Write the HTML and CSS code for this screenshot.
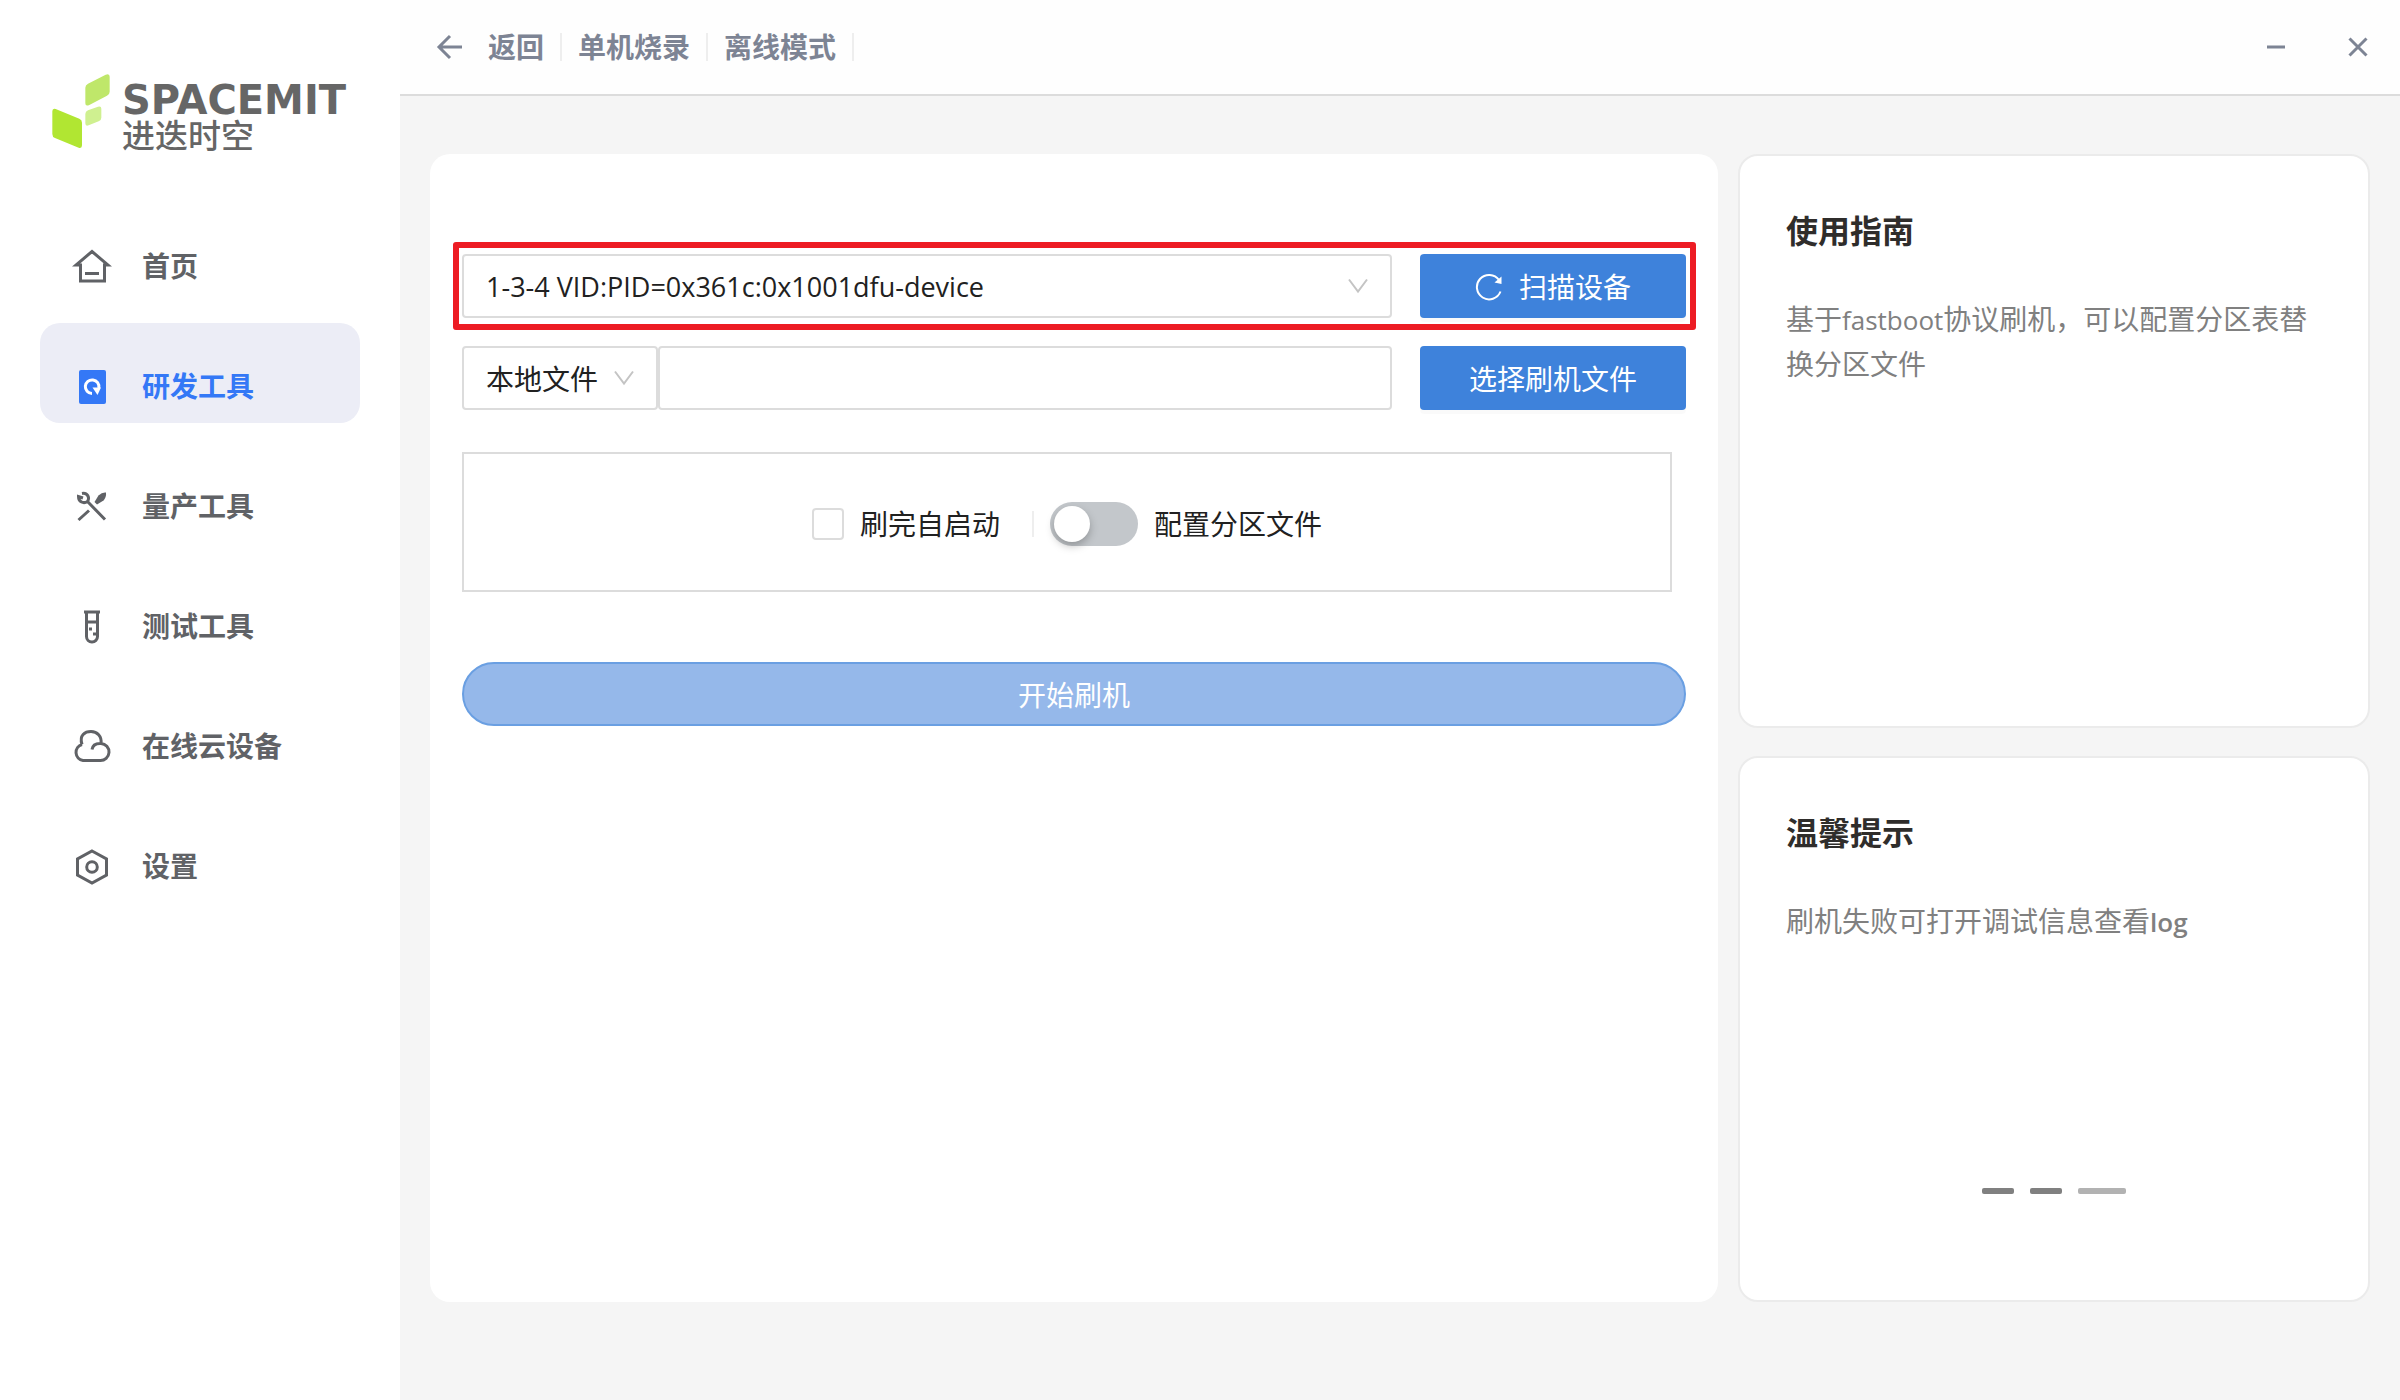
FILE: index.html
```html
<!DOCTYPE html>
<html lang="zh-CN">
<head>
<meta charset="utf-8">
<meta name="viewport" content="width=device-width, initial-scale=1">
<title>SPACEMIT 进迭时空</title>
<link rel="stylesheet" href="styles.css">
</head>
<body>
<div class="app">
  <aside class="sidebar">
    <div class="brand">
      <svg class="brand-mark" viewBox="66 43 172 222" aria-hidden="true">
        <path fill="#b1e632" d="M66 155q0-10 10-7l71 29q8 3 8 12v68q0 10-10 7l-71-29q-8-3-8-12z"/>
        <path fill="#bfe76a" d="M165 84q0-8 8-12l53-27q12-5 12 6v45q0 8-8 12l-53 28q-12 5-12-5z"/>
        <path fill="#cff090" d="M165 163q0-8 8-11l30-11q10-3 10 6v27q0 8-8 11l-30 12q-10 4-10-6z"/>
      </svg>
      <div class="brand-text">
        <span class="brand-en">SPACEMIT</span>
        <span class="brand-cn">进迭时空</span>
      </div>
    </div>
    <nav class="nav">
      <a class="nav-item" href="#home">
        <svg class="nav-icon" viewBox="0 0 40 40" aria-hidden="true"><path d="M4 19h4.500V35h24V19H36L20 5.500zM13 27.500h14"/></svg>
        <span>首页</span>
      </a>
      <a class="nav-item active" href="#dev" aria-current="page">
        <svg class="nav-icon" viewBox="0 0 40 40" aria-hidden="true"><rect x="7" y="4" width="27" height="34" rx="2" fill="currentColor" stroke="none"/><path stroke="#fff" d="M20 27.500A6.800 6.800 0 1 1 26.800 22"/><path fill="#fff" stroke="none" d="M20.500 21.500L29 21.500 25.500 29z"/></svg>
        <span>研发工具</span>
      </a>
      <a class="nav-item" href="#mass">
        <svg class="nav-icon" viewBox="0 0 40 40" aria-hidden="true"><path d="M10 7.500C15.500 6.500 18 11.500 15.500 15.500 11.500 18 6.500 16 6.500 10.500L11 12M15.500 15.500L33 33.500M17 24.500L6.500 34"/><path fill="currentColor" stroke="none" d="M22.500 16L26.500 9.500q3.500-3.500 7.500-3 .500 4.500-2.500 8L25 18.500z"/></svg>
        <span>量产工具</span>
      </a>
      <a class="nav-item" href="#test">
        <svg class="nav-icon" viewBox="0 0 40 40" aria-hidden="true"><path d="M12 6h16M14.500 6v24.500a5.500 5.500 0 0 0 11 0V6M14.500 16h11M17 23h3M21 28h3"/></svg>
        <span>测试工具</span>
      </a>
      <a class="nav-item" href="#cloud">
        <svg class="nav-icon" viewBox="1 0 40 40" aria-hidden="true"><path d="M11 18.500C8 9 14 5.500 20 5.500S31 10 30 17.500A8.500 8.500 0 0 1 29 34.500H12A8.200 8.200 0 0 1 11 18.500M30 17.500Q22 17 21 23.500"/></svg>
        <span>在线云设备</span>
      </a>
      <a class="nav-item" href="#settings">
        <svg class="nav-icon" viewBox="0 0 40 40" aria-hidden="true"><path d="M20 5l14.500 8v16L20 37 5.500 29V13z"/><circle cx="20" cy="21" r="5.300"/></svg>
        <span>设置</span>
      </a>
    </nav>
  </aside>

  <div class="workspace">
    <header class="topbar">
      <a class="crumb back" href="#back">
        <svg class="back-icon" viewBox="0 0 28 28" aria-hidden="true"><path d="M26 14H4M14 3L3 14l11 11"/></svg>
        <span>返回</span>
      </a>
      <a class="crumb" href="#single">单机烧录</a>
      <a class="crumb" href="#offline">离线模式</a>
      <div class="window-controls">
        <button class="window-btn" type="button" aria-label="最小化"><svg viewBox="0 0 20 20" aria-hidden="true"><path d="M1 10h18"/></svg></button>
        <button class="window-btn" type="button" aria-label="关闭"><svg viewBox="0 0 20 20" aria-hidden="true"><path d="M1.500 1.500l17 17M18.500 1.500l-17 17"/></svg></button>
      </div>
    </header>

    <main class="content">
      <form class="card flash-card">
        <div class="row highlighted">
          <div class="select-wrap device">
            <select aria-label="设备"><option>1-3-4 VID:PID=0x361c:0x1001dfu-device</option></select>
            <svg class="chevron" viewBox="0 0 20 20" aria-hidden="true"><path d="M1 3.500l9 12 9-12"/></svg>
          </div>
          <button class="btn" type="button">
            <svg class="reload" viewBox="0 0 28 28" aria-hidden="true"><path d="M25.500 18.500A12.200 12.200 0 1 1 24 7"/><path class="reload-tip" d="M26.500 3.500v7.500l-7-1.500z"/></svg>
            <span>扫描设备</span>
          </button>
        </div>
        <div class="row">
          <div class="source">
            <div class="select-wrap origin">
              <select aria-label="文件来源"><option>本地文件</option></select>
              <svg class="chevron" viewBox="0 0 20 20" aria-hidden="true"><path d="M1 3.500l9 12 9-12"/></svg>
            </div>
            <input class="path" type="text" aria-label="刷机文件路径">
          </div>
          <button class="btn" type="button">选择刷机文件</button>
        </div>
        <div class="options">
          <label class="option"><input class="check" type="checkbox">刷完自启动</label>
          <span class="divider"></span>
          <label class="option"><input class="switch" type="checkbox" role="switch">配置分区文件</label>
        </div>
        <button class="start" type="button">开始刷机</button>
      </form>

      <section class="card info">
        <h2>使用指南</h2>
        <p>基于<span class="latin">fastboot</span>协议刷机，可以配置分区表替换分区文件</p>
      </section>

      <section class="card info">
        <h2>温馨提示</h2>
        <p>刷机失败可打开调试信息查看<strong class="latin">log</strong></p>
        <div class="pager">
          <button type="button" aria-label="第 1 条"></button>
          <button type="button" aria-label="第 2 条"></button>
          <button class="current" type="button" aria-label="第 3 条"></button>
        </div>
      </section>
    </main>
  </div>
</div>
</body>
</html>
```
FILE: styles.css
```css
*,
*::before,
*::after {
  box-sizing: border-box;
}

body {
  margin: 0;
  background: #f5f5f5;
  color: #212121;
  font-family: "Open Sans", "Noto Sans CJK SC", sans-serif;
  font-size: 28px;
  line-height: 44px;
}

button,
input,
select {
  margin: 0;
  font: inherit;
  color: inherit;
}

a {
  color: inherit;
  text-decoration: none;
}

svg {
  flex: none;
  fill: none;
  stroke: currentColor;
}

.app {
  display: grid;
  grid-template-columns: 400px minmax(0, 1fr);
  min-height: 100vh;
}

/* Sidebar */
.sidebar {
  padding: 74px 40px 40px;
  background: #fff;
}

.brand {
  display: flex;
  gap: 12px;
  height: 76px;
  margin-bottom: 53px;
  padding-left: 12px;
  color: #666;
}

.brand-mark {
  width: 58px;
  height: 74px;
  stroke: none;
}

.brand-text {
  display: flex;
  flex-direction: column;
  padding-top: 8px;
  white-space: nowrap;
}

.brand-en {
  font-family: "DejaVu Sans", sans-serif;
  font-size: 40px;
  font-weight: 700;
  line-height: 36px;
}

.brand-cn {
  font-family: "Noto Sans CJK SC", sans-serif;
  font-size: 33px;
  font-weight: 500;
  line-height: 32px;
}

.nav {
  display: flex;
  flex-direction: column;
  gap: 20px;
}

.nav-item {
  display: flex;
  align-items: center;
  gap: 30px;
  height: 100px;
  padding: 26px 32px 0;
  border-radius: 20px;
  color: #606266;
  font-weight: 700;
}

.nav-item.active {
  background: #ecedf6;
  color: #3478f6;
}

.nav-icon {
  width: 40px;
  height: 40px;
  stroke-width: 3;
}

/* Top bar */
.workspace {
  display: flex;
  flex-direction: column;
}

.topbar {
  display: flex;
  align-items: center;
  height: 96px;
  padding: 0 22px 0 36px;
  background: #fefefe;
  border-bottom: 2px solid #dcdcdc;
  color: #7d8494;
  font-weight: 700;
}

.crumb {
  display: flex;
  align-items: center;
  padding-left: 16px;
}

.crumb::after {
  content: "";
  width: 2px;
  height: 28px;
  margin-left: 16px;
  background: #eee;
}

.back {
  padding-left: 0;
}

.back-icon {
  width: 28px;
  height: 28px;
  margin-right: 24px;
  stroke-width: 3;
}

.window-controls {
  display: flex;
  gap: 42px;
  margin-left: auto;
}

.window-btn {
  display: grid;
  place-items: center;
  width: 40px;
  height: 40px;
  padding: 0;
  border: 0;
  background: none;
}

.window-btn svg {
  width: 20px;
  height: 20px;
  stroke-width: 3;
}

/* Cards */
.content {
  flex: 1;
  display: grid;
  grid-template-columns: 161fr 79fr;
  grid-template-rows: 574fr 546fr;
  gap: 28px 20px;
  padding: 58px 30px 98px;
}

.card {
  border-radius: 20px;
  background: #fff;
}

.flash-card {
  grid-row: span 2;
  display: flex;
  flex-direction: column;
  padding: 100px 32px 32px;
}

.row {
  display: flex;
  gap: 28px;
  margin-bottom: 28px;
}

.highlighted {
  position: relative;
}

.highlighted::after {
  content: "";
  position: absolute;
  inset: -12px -10px -12px -9px;
  border: 6px solid #ed1c24;
  border-radius: 3px;
  pointer-events: none;
}

.select-wrap {
  display: grid;
  align-items: center;
}

.select-wrap > * {
  grid-area: 1 / 1;
}

.device,
.source {
  flex: 1;
}

.source {
  display: flex;
}

.origin {
  width: 196px;
}

select,
.path {
  width: 100%;
  height: 64px;
  padding: 2px 22px 0;
  border: 2px solid #dcdcdc;
  border-radius: 4px;
  background: #fff;
  appearance: none;
}

.path {
  flex: 1;
}

.device select {
  font-size: 27px;
}

.chevron {
  justify-self: end;
  width: 20px;
  height: 20px;
  margin-right: 24px;
  color: #c4c4c4;
  stroke-width: 2;
  pointer-events: none;
}

.btn {
  display: flex;
  align-items: center;
  justify-content: center;
  gap: 16px;
  width: 266px;
  height: 64px;
  padding: 2px 0 0;
  border: 0;
  border-radius: 4px;
  background: #3e82db;
  box-shadow: 0 4px 0 rgba(0, 0, 0, 0.02);
  color: #fff;
}

.reload {
  width: 28px;
  height: 28px;
  stroke-width: 2;
}

.reload-tip {
  fill: currentColor;
  stroke: none;
}

.options {
  display: flex;
  align-items: center;
  justify-content: center;
  gap: 16px;
  height: 140px;
  margin: 14px 14px 70px 0;
  padding-top: 3px;
  border: 2px solid #dcdcdc;
}

.option {
  display: flex;
  align-items: center;
  gap: 16px;
}

.check {
  width: 32px;
  height: 32px;
  border: 2px solid #dcdcdc;
  border-radius: 4px;
  background: #fff;
  appearance: none;
}

.divider {
  width: 2px;
  height: 26px;
  margin-left: 16px;
  background: #eee;
}

.switch {
  width: 88px;
  height: 44px;
  padding: 4px;
  border-radius: 22px;
  background: #c3c7cb;
  appearance: none;
}

.switch::before {
  content: "";
  display: block;
  width: 36px;
  height: 36px;
  border-radius: 50%;
  background: #fff;
  box-shadow: 0 4px 8px rgba(0, 0, 0, 0.25);
}

.start {
  height: 64px;
  padding: 2px 0 0;
  border: 2px solid #6a9fe2;
  border-radius: 32px;
  background: #95b8ea;
  color: #fff;
}

/* Info cards */
.info {
  display: flex;
  flex-direction: column;
  padding: 53px 46px 106px;
  border: 2px solid #ebebeb;
}

.info h2 {
  margin: 0 0 44px;
  font-size: 32px;
  line-height: 44px;
  color: #2f2d2b;
}

.info p {
  margin: 0;
  color: #808080;
}

.latin {
  font-size: 26px;
}

strong.latin {
  font-weight: 600;
}

.pager {
  display: flex;
  justify-content: center;
  gap: 16px;
  margin-top: auto;
}

.pager button {
  width: 32px;
  height: 6px;
  padding: 0;
  border: 0;
  border-radius: 2px;
  background: #808080;
}

.pager .current {
  width: 48px;
  background: #b2b2b2;
}
```
